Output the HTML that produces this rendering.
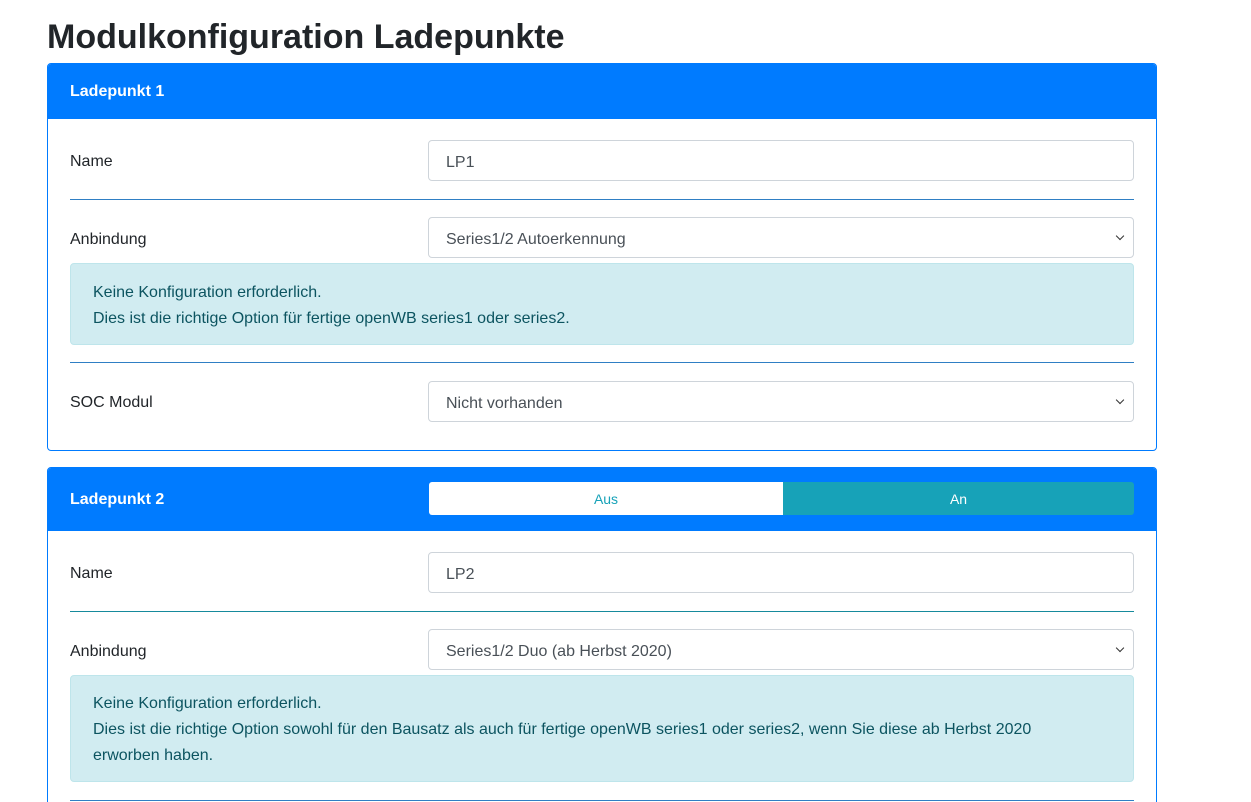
<!DOCTYPE html>
<html style="width:1251px;height:802px;overflow:hidden"><head><meta charset="utf-8"><style>
*{box-sizing:border-box;margin:0;padding:0}
body{width:1251px;height:802px;overflow:hidden;background:#fff;font-family:"Liberation Sans",sans-serif;font-size:16px;color:#212529;position:relative}
.a{position:absolute}
h1{position:absolute;left:47px;top:16px;font-size:34px;font-weight:bold;color:#212529;line-height:42px}
.card{position:absolute;left:47px;width:1110px;border:1px solid #007bff;border-radius:4px;overflow:hidden}
.hd{position:absolute;left:0;top:0;width:100%;background:#007bff;color:#fff;font-weight:bold;font-size:16px}
.lbl{position:absolute;left:70px;font-size:16px}
.inp{position:absolute;left:428px;width:706px;height:41px;border:1px solid #ced4da;border-radius:4px;padding:0 17px;line-height:43px;color:#495057;font-size:16px;background:#fff}
.sel::after{content:"";position:absolute;right:10px;top:15px;width:5px;height:5px;border-right:1.5px solid #333;border-bottom:1.5px solid #333;transform:rotate(45deg)}
.hr{position:absolute;left:70px;width:1064px;height:1px;background:#2f7fc4}
.al{position:absolute;left:70px;width:1064px;background:#d1ecf1;border:1px solid #bee5eb;border-radius:4px;color:#0c5460;padding:18px 22px 0;line-height:26px;font-size:16px}
</style></head><body>
<h1>Modulkonfiguration Ladepunkte</h1>
<div class="card" style="top:63px;height:388px"><div class="hd" style="height:55px;line-height:55px;padding-left:22px">Ladepunkt 1</div></div>
<div class="lbl" style="top:153px">Name</div>
<div class="inp" style="top:140px">LP1</div>
<div class="hr" style="top:199px"></div>
<div class="lbl" style="top:231px">Anbindung</div>
<div class="inp sel" style="top:217px">Series1/2 Autoerkennung</div>
<div class="al" style="top:263px;height:82px;padding-top:16px">Keine Konfiguration erforderlich.<br>Dies ist die richtige Option für fertige openWB series1 oder series2.</div>
<div class="hr" style="top:362px"></div>
<div class="lbl" style="top:394px">SOC Modul</div>
<div class="inp sel" style="top:381px">Nicht vorhanden</div>

<div class="card" style="top:467px;height:360px"><div class="hd" style="height:63px;line-height:63px;padding-left:22px">Ladepunkt 2</div></div>
<div class="a" style="left:429px;top:482px;width:354px;height:33px;background:#fff;border-radius:3px 0 0 3px;color:#17a2b8;text-align:center;line-height:35px;font-size:14px">Aus</div>
<div class="a" style="left:783px;top:482px;width:351px;height:33px;background:#17a2b8;border-radius:0 3px 3px 0;color:#fff;text-align:center;line-height:35px;font-size:14px">An</div>
<div class="lbl" style="top:565px">Name</div>
<div class="inp" style="top:552px">LP2</div>
<div class="hr" style="top:611px;background:#168a9c"></div>
<div class="lbl" style="top:643px">Anbindung</div>
<div class="inp sel" style="top:629px">Series1/2 Duo (ab Herbst 2020)</div>
<div class="al" style="top:675px;height:107px;padding-top:15px;padding-right:90px">Keine Konfiguration erforderlich.<br>Dies ist die richtige Option sowohl für den Bausatz als auch für fertige openWB series1 oder series2, wenn Sie diese ab Herbst 2020 erworben haben.</div>
<div class="hr" style="top:800px"></div>
</body></html>
